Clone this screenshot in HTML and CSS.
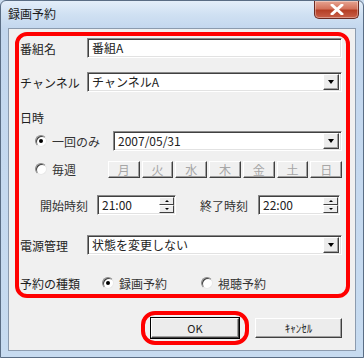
FILE: index.html
```html
<!DOCTYPE html>
<html lang="ja">
<head>
    <meta charset="UTF-8">
    <title>録画予約</title>
    <link rel="stylesheet" href="styles.css">
</head>
<body>
    <div class="window">
        <div class="titlebar">
            <span class="title">録画予約</span>
            <div class="close-btn">
                <svg width="14" height="11" viewBox="0 0 14 11">
                    <path d="M2 1 L12 10 M12 1 L2 10" stroke="#fff" stroke-width="3" stroke-linecap="round"/>
                </svg>
            </div>
        </div>
        <div class="client">
            <div class="group">
                <div class="row row-first">
                    <span class="label">番組名</span>
                    <div class="field field-wide">番組A</div>
                </div>

                <div class="row row-channel">
                    <span class="label">チャンネル</span>
                    <div class="field field-wide select">
                        <span>チャンネルA</span>
                        <span class="drop-btn"></span>
                    </div>
                </div>

                <div class="row-title">日時</div>

                <div class="row row-once">
                    <span class="radio checked"></span>
                    <span class="radio-text once-text">一回のみ</span>
                    <div class="field field-date select">
                        <span>2007/05/31</span>
                        <span class="drop-btn"></span>
                    </div>
                </div>

                <div class="row row-weekly">
                    <span class="radio"></span>
                    <span class="radio-text weekly-text">毎週</span>
                    <div class="days">
                        <span class="day">月</span>
                        <span class="day">火</span>
                        <span class="day">水</span>
                        <span class="day">木</span>
                        <span class="day">金</span>
                        <span class="day">土</span>
                        <span class="day">日</span>
                    </div>
                </div>

                <div class="row row-time">
                    <span class="time-label">開始時刻</span>
                    <div class="field spin spin-start">
                        <span>21:00</span>
                        <span class="spin-btns"><span class="up"></span><span class="down"></span></span>
                    </div>
                    <span class="time-label end-label">終了時刻</span>
                    <div class="field spin spin-end">
                        <span>22:00</span>
                        <span class="spin-btns"><span class="up"></span><span class="down"></span></span>
                    </div>
                </div>

                <div class="row row-power">
                    <span class="label">電源管理</span>
                    <div class="field field-wide select">
                        <span>状態を変更しない</span>
                        <span class="drop-btn"></span>
                    </div>
                </div>

                <div class="row row-type">
                    <span class="label type-label">予約の種類</span>
                    <span class="radio checked"></span>
                    <span class="radio-text rec-text">録画予約</span>
                    <span class="radio"></span>
                    <span class="radio-text">視聴予約</span>
                </div>
            </div>

            <div class="buttons">
                <div class="ring">
                    <div class="btn btn-default">OK</div>
                </div>
                <div class="btn btn-cancel">ｷｬﾝｾﾙ</div>
            </div>
        </div>
    </div>
</body>
</html>
```

FILE: styles.css
```css
* {
    box-sizing: border-box;
}
body {
    margin: 0;
    width: 364px;
    height: 358px;
    overflow: hidden;
    font-family: "Noto Sans CJK JP", "Liberation Sans", sans-serif;
    font-size: 12px;
    color: #1e1e1e;
    background: #c9dbee;
}
.window {
    width: 364px;
    height: 358px;
    border: 1px solid #5a6d84;
    border-radius: 6px 6px 0 0;
    background: linear-gradient(to bottom, #e4eef9 0px, #cfe0f2 14px, #c3d7ee 28px, #c7dbf0 100%);
    display: flex;
    flex-direction: column;
}
.titlebar {
    height: 27px;
    display: flex;
    align-items: flex-start;
    justify-content: space-between;
    flex-shrink: 0;
}
.title {
    margin: 6px 0 0 7px;
    font-size: 12px;
    color: #1a1a1a;
    line-height: 14px;
}
.close-btn {
    width: 45px;
    height: 18px;
    margin-right: 4px;
    border: 1px solid #6b2a22;
    border-top: none;
    border-radius: 0 0 5px 5px;
    background: linear-gradient(to bottom, #e6a492 0%, #d3735c 45%, #b53f26 55%, #c8604a 100%);
    display: flex;
    align-items: center;
    justify-content: center;
    box-shadow: inset 0 0 0 1px rgba(255, 255, 255, 0.35);
}
.client {
    flex: 1;
    margin: 0 7px 6px 7px;
    border: 1px solid #8c9bae;
    background: #f0f0f0;
    display: flex;
    flex-direction: column;
}
.group {
    margin: 3px 5px 0 6px;
    height: 266px;
    border: 4px solid #ff0000;
    border-radius: 12px;
    padding: 2px 4px 0 1px;
    display: flex;
    flex-direction: column;
}
.row {
    display: flex;
    align-items: center;
    height: 20px;
    flex-shrink: 0;
}
.row-channel {
    margin-top: 14px;
}
.row-title {
    margin-top: 18px;
    height: 16px;
    line-height: 16px;
}
.row-once {
    margin-top: 5px;
}
.row-weekly {
    margin-top: 9px;
    height: 18px;
}
.row-time {
    margin-top: 17px;
}
.row-power {
    margin-top: 20px;
}
.row-type {
    margin-top: 18px;
}
.label {
    width: 67px;
    flex-shrink: 0;
}
.type-label {
    width: 78px;
}
.field {
    height: 20px;
    background: #fff;
    border: 1px solid;
    border-color: #8a8a8a #ffffff #ffffff #8a8a8a;
    box-shadow: inset 1px 1px 0 #404040, inset -1px -1px 0 #e2e2e2;
    padding: 0 2px 0 4px;
    display: flex;
    align-items: center;
    justify-content: space-between;
    line-height: 16px;
    color: #222;
}
.field-wide {
    flex: 1;
}
.field-date {
    flex: 1;
    margin-left: 13px;
}
.drop-btn {
    width: 16px;
    height: 16px;
    background: #ececec;
    border: 1px solid;
    border-color: #ffffff #404040 #404040 #ffffff;
    box-shadow: inset -1px -1px 0 #a0a0a0;
    position: relative;
}
.drop-btn::after {
    content: "";
    position: absolute;
    left: 4px;
    top: 5px;
    border-left: 3.5px solid transparent;
    border-right: 3.5px solid transparent;
    border-top: 4px solid #000;
}
.radio {
    width: 12px;
    height: 12px;
    border-radius: 50%;
    background: #fff;
    border: 1px solid #8a8a8a;
    border-right-color: #e8e8e8;
    border-bottom-color: #e8e8e8;
    box-shadow: inset 1px 1px 0 #404040;
    flex-shrink: 0;
    position: relative;
    margin-left: 15px;
}
.radio.checked::after {
    content: "";
    position: absolute;
    left: 3px;
    top: 3px;
    width: 4px;
    height: 4px;
    border-radius: 50%;
    background: #000;
}
.radio-text {
    margin-left: 5px;
    color: #333;
}
.once-text {
    width: 48px;
}
.weekly-text {
    width: 56px;
}
.row-type .radio {
    margin-left: 4px;
}
.rec-text {
    width: 78px;
}
.days {
    flex: 1;
    display: flex;
    gap: 2px;
    height: 17px;
}
.day {
    flex: 1;
    height: 17px;
    background: #f0f0f0;
    border: 1px solid;
    border-color: #ffffff #404040 #404040 #ffffff;
    box-shadow: inset -1px -1px 0 #a0a0a0;
    color: #a6a6a6;
    text-align: center;
    line-height: 15px;
    font-size: 12px;
}
.time-label {
    margin-left: 20px;
    width: 57px;
    color: #333;
}
.end-label {
    margin-left: 24px;
    width: 58px;
}
.spin {
    padding-right: 1px;
}
.spin-start {
    width: 79px;
}
.spin-end {
    width: 82px;
}
.spin-btns {
    width: 15px;
    height: 16px;
    display: flex;
    flex-direction: column;
}
.spin-btns span {
    flex: 1;
    background: #ececec;
    border: 1px solid;
    border-color: #ffffff #404040 #404040 #ffffff;
    position: relative;
}
.spin-btns .up::after,
.spin-btns .down::after {
    content: "";
    position: absolute;
    left: 5px;
    top: 2px;
    border-left: 2px solid transparent;
    border-right: 2px solid transparent;
}
.spin-btns .up::after {
    border-bottom: 2px solid #000;
}
.spin-btns .down::after {
    border-top: 2px solid #000;
}
.buttons {
    display: flex;
    justify-content: flex-end;
    align-items: center;
    gap: 6px;
    margin-top: 13px;
    padding-right: 13px;
}
.ring {
    border: 4px solid #ff0000;
    border-radius: 14px;
    padding: 3px 6px;
}
.btn {
    height: 20px;
    background: #ececec;
    border: 1px solid;
    border-color: #ffffff #404040 #404040 #ffffff;
    box-shadow: inset -1px -1px 0 #a0a0a0;
    display: flex;
    align-items: center;
    justify-content: center;
    font-size: 11px;
    color: #222;
    font-family: "Liberation Sans Narrow", "Noto Sans CJK JP", sans-serif;
}
.btn-default {
    width: 88px;
    outline: 1px solid #000;
}
.btn-cancel {
    width: 87px;
}
```
